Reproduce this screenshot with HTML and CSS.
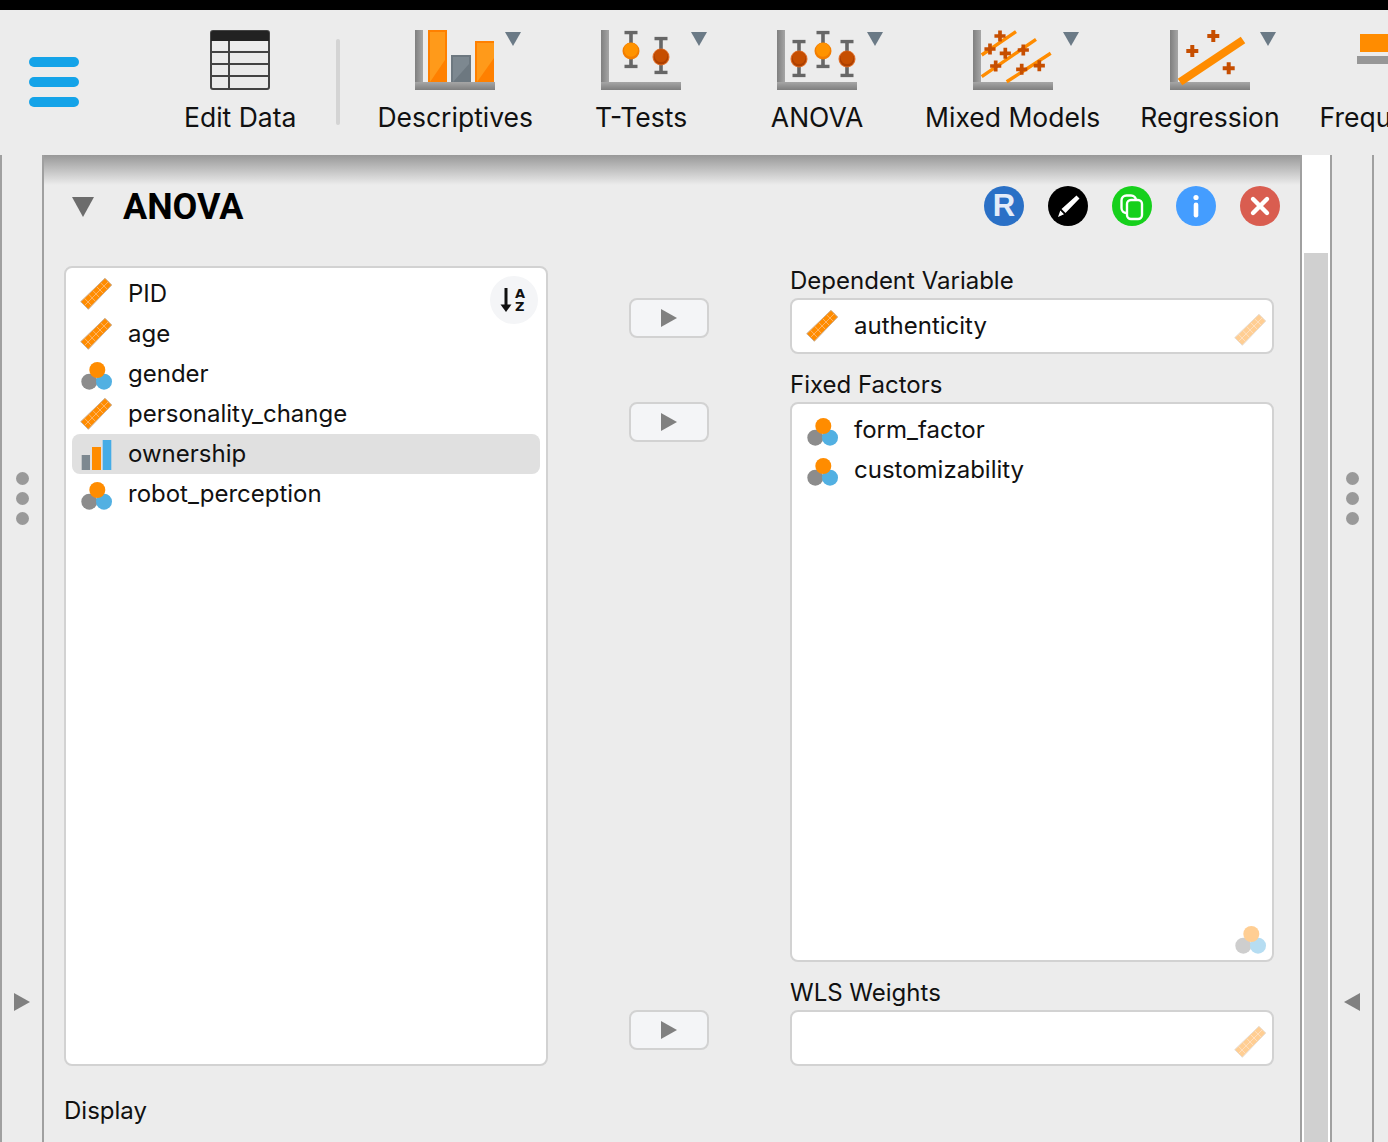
FILE: index.html
```html
<!DOCTYPE html>
<html lang="en">
<head>
<meta charset="utf-8">
<title>ANOVA</title>
<link rel="stylesheet" href="styles.css">
</head>
<body>
<svg class="defs" width="0" height="0" aria-hidden="true">
  <defs>
    <linearGradient id="axv" x1="0" x2="1" y1="0" y2="0"><stop offset="0" stop-color="#7f7f7f"/><stop offset="1" stop-color="#a6a6a6"/></linearGradient>
    <linearGradient id="axh" x1="0" x2="0" y1="0" y2="1"><stop offset="0" stop-color="#a6a6a6"/><stop offset="1" stop-color="#7f7f7f"/></linearGradient>
    <symbol id="axes" viewBox="0 0 80 60">
      <rect x="0" y="0" width="8" height="60" fill="url(#axv)"/>
      <rect x="0" y="52" width="80" height="8" fill="url(#axh)"/>
    </symbol>
    <symbol id="ruler" viewBox="0 0 32 32">
      <polygon points="0.7,23.7 25,0.3 31.7,7 8.3,31.3" fill="#ff8c00" stroke="#c8ae94" stroke-width="1"/>
      <path d="M4.4 20.2 11.6 27.7M8.6 16.2 15.6 23.6M12.6 12.4 19.6 19.6M16.6 8.6 23.6 15.6M20.6 4.8 27.6 11.6M4.5 27.5 28.4 3.6" stroke="#ffb566" stroke-width="1" fill="none"/>
    </symbol>
    <symbol id="nominal" viewBox="0 0 32 32">
      <circle cx="9.3" cy="23.7" r="8" fill="#8c8c8c"/>
      <circle cx="24" cy="23.7" r="8" fill="#52b0e2"/>
      <circle cx="17.3" cy="12" r="8" fill="#ff8c00"/>
    </symbol>
    <symbol id="ordinal" viewBox="0 0 32 32">
      <rect x="1.7" y="17" width="8.3" height="15" fill="#7d8890"/>
      <rect x="12" y="9" width="9" height="23" fill="#ff8c00"/>
      <rect x="22.7" y="2" width="8.6" height="30" fill="#45ace6"/>
    </symbol>
    <symbol id="ball-o" viewBox="0 0 18 18">
      <circle cx="9" cy="9" r="8.5" fill="#f27d00"/>
      <circle cx="9" cy="7.8" r="7" fill="#ff9300"/>
    </symbol>
    <symbol id="ball-d" viewBox="0 0 18 18">
      <circle cx="9" cy="9" r="8.5" fill="#e0702a"/>
      <circle cx="9" cy="9" r="7.4" fill="#ad4000"/>
      <circle cx="9" cy="7.6" r="6.4" fill="#c64e00"/>
    </symbol>
    <symbol id="whisk" viewBox="0 0 14 38">
      <path d="M0.5 2H13.5M7 2V36M0.5 36H13.5" stroke="#666" stroke-width="3.6" fill="none"/>
    </symbol>
    <symbol id="plus" viewBox="0 0 14 14">
      <path d="M7 1V13M1 7H13" stroke="#c64e00" stroke-width="4" fill="none"/>
    </symbol>
  </defs>
</svg>

<div class="app">
  <div class="topbar"></div>
  <header class="toolbar">
    <div class="menu"><span class="menu-bar"></span><span class="menu-bar"></span><span class="menu-bar"></span></div>

    <div class="tool">
      <svg class="tool-icon edit-icon" viewBox="0 0 60 60" width="60" height="60">
        <rect x="1" y="1" width="58" height="58" rx="2" fill="none" stroke="#444" stroke-width="2"/>
        <path d="M1 3a2 2 0 0 1 2-2H57a2 2 0 0 1 2 2V11H1Z" fill="#222"/>
        <path d="M1 22H59M1 34H59M1 46H59M19 11V59" stroke="#444" stroke-width="2" fill="none"/>
      </svg>
      <span class="tool-label">Edit Data</span>
    </div>

    <div class="sep"></div>

    <div class="tool">
      <div class="icon-wrap">
        <svg viewBox="0 0 80 60" width="80" height="60">
          <use href="#axes" width="80" height="60"/>
          <rect x="13" y="0" width="19" height="52" fill="#ff8000"/>
          <polygon points="15,2 30,2 30,30 15,52" fill="#ff9a1a"/>
          <rect x="36" y="25" width="20" height="27" fill="#6d7880"/>
          <polygon points="38,27 54,27 54,34 38,52" fill="#7d8890"/>
          <rect x="60" y="11" width="19" height="41" fill="#ff8000"/>
          <polygon points="62,13 79,13 79,28 62,52" fill="#ff9a1a"/>
        </svg>
        <span class="drop"></span>
      </div>
      <span class="tool-label">Descriptives</span>
    </div>

    <div class="tool">
      <div class="icon-wrap">
        <svg viewBox="0 0 80 60" width="80" height="60">
          <use href="#axes" width="80" height="60"/>
          <use href="#whisk" x="23" y="0.5" width="14" height="38"/>
          <use href="#ball-o" x="21" y="12" width="18" height="18"/>
          <use href="#whisk" x="53" y="6.5" width="14" height="38"/>
          <use href="#ball-d" x="51" y="18" width="18" height="18"/>
        </svg>
        <span class="drop"></span>
      </div>
      <span class="tool-label">T-Tests</span>
    </div>

    <div class="tool">
      <div class="icon-wrap">
        <svg viewBox="0 0 80 60" width="80" height="60">
          <use href="#axes" width="80" height="60"/>
          <use href="#whisk" x="15" y="9.5" width="14" height="38"/>
          <use href="#ball-d" x="13" y="20" width="18" height="18"/>
          <use href="#whisk" x="39" y="0.5" width="14" height="38"/>
          <use href="#ball-o" x="37" y="12" width="18" height="18"/>
          <use href="#whisk" x="63" y="9.5" width="14" height="38"/>
          <use href="#ball-d" x="61" y="20" width="18" height="18"/>
        </svg>
        <span class="drop"></span>
      </div>
      <span class="tool-label">ANOVA</span>
    </div>

    <div class="tool">
      <div class="icon-wrap">
        <svg viewBox="0 0 80 60" width="80" height="60">
          <use href="#axes" width="80" height="60"/>
          <path d="M8.7 25 43 1.7M8.7 46.7 63 9.3M33.7 51.7 77.7 23.3" stroke="#ff8c00" stroke-width="3.4" fill="none"/>
          <use href="#plus" x="20.5" y="-0.5" width="13" height="13"/>
          <use href="#plus" x="10.5" y="12.5" width="13" height="13"/>
          <use href="#plus" x="25.8" y="16.8" width="13" height="13"/>
          <use href="#plus" x="43.8" y="13.5" width="13" height="13"/>
          <use href="#plus" x="16.2" y="29.5" width="13" height="13"/>
          <use href="#plus" x="42.2" y="32.8" width="13" height="13"/>
          <use href="#plus" x="59.8" y="29.2" width="13" height="13"/>
        </svg>
        <span class="drop"></span>
      </div>
      <span class="tool-label">Mixed Models</span>
    </div>

    <div class="tool">
      <div class="icon-wrap">
        <svg viewBox="0 0 80 60" width="80" height="60">
          <use href="#axes" width="80" height="60"/>
          <path d="M10 52 73 10" stroke="#ff8c00" stroke-width="8" fill="none"/>
          <use href="#plus" x="36.3" y="-1" width="14" height="14"/>
          <use href="#plus" x="15.3" y="14" width="14" height="14"/>
          <use href="#plus" x="51.7" y="31.3" width="14" height="14"/>
        </svg>
        <span class="drop"></span>
      </div>
      <span class="tool-label">Regression</span>
    </div>

    <div class="tool">
      <div class="icon-wrap">
        <svg viewBox="0 0 80 60" width="80" height="60">
          <rect x="3" y="4" width="77" height="18" fill="#ff8c00"/>
          <rect x="0" y="26" width="80" height="8" fill="#979797"/>
        </svg>
      </div>
      <span class="tool-label">Frequencies</span>
    </div>
  </header>

  <div class="workspace">
    <aside class="gutter">
      <div class="dots"><span class="dot"></span><span class="dot"></span><span class="dot"></span></div>
      <span class="tri tri-right"></span>
    </aside>

    <main class="panel">
      <div class="panel-head">
        <span class="collapse"></span>
        <h1 class="title">ANOVA</h1>
        <div class="actions">
          <span class="round r-blue">R</span>
          <span class="round r-black">
            <svg viewBox="0 0 40 40" width="40" height="40"><path d="M28.5 9.5 31.5 12.5 17.5 27 13.5 23ZM12.3 24.5 16 28.3 10 31Z" fill="#fff"/></svg>
          </span>
          <span class="round r-green">
            <svg viewBox="0 0 40 40" width="40" height="40">
              <rect x="9.5" y="9.5" width="14.5" height="17.5" rx="5" fill="none" stroke="#fff" stroke-width="2.4"/>
              <rect x="15" y="14" width="15" height="19" rx="4" fill="#16d01c" stroke="#fff" stroke-width="2.4"/>
            </svg>
          </span>
          <span class="round r-info">
            <svg viewBox="0 0 40 40" width="40" height="40"><circle cx="20" cy="11.5" r="2.6" fill="#fff"/><rect x="17.7" y="16.5" width="4.6" height="15" rx="2.3" fill="#fff"/></svg>
          </span>
          <span class="round r-red">
            <svg viewBox="0 0 40 40" width="40" height="40"><path d="M13 13 27 27M27 13 13 27" stroke="#fff" stroke-width="4.4" stroke-linecap="round" fill="none"/></svg>
          </span>
        </div>
      </div>

      <div class="form">
        <div class="box supplier">
          <div class="var"><svg class="vi" width="32" height="32"><use href="#ruler" width="32" height="32"/></svg><span>PID</span></div>
          <div class="var"><svg class="vi" width="32" height="32"><use href="#ruler" width="32" height="32"/></svg><span>age</span></div>
          <div class="var"><svg class="vi" width="32" height="32"><use href="#nominal" width="32" height="32"/></svg><span>gender</span></div>
          <div class="var"><svg class="vi" width="32" height="32"><use href="#ruler" width="32" height="32"/></svg><span>personality_change</span></div>
          <div class="var selected"><svg class="vi" width="32" height="32"><use href="#ordinal" width="32" height="32"/></svg><span>ownership</span></div>
          <div class="var"><svg class="vi" width="32" height="32"><use href="#nominal" width="32" height="32"/></svg><span>robot_perception</span></div>
          <div class="sort">
            <svg viewBox="0 0 14 26" width="14" height="26"><path d="M7 1V20" stroke="#111" stroke-width="3" fill="none"/><path d="M1.5 17.5H12.5L7 25Z" fill="#111"/></svg>
            <div class="sort-letters"><span>A</span><span>Z</span></div>
          </div>
        </div>

        <div class="targets">
          <div class="target">
            <button class="move"><span class="tri-move"></span></button>
            <div class="group">
              <div class="group-label">Dependent Variable</div>
              <div class="box slot">
                <div class="var"><svg class="vi" width="32" height="32"><use href="#ruler" width="32" height="32"/></svg><span>authenticity</span></div>
                <svg class="hint" width="32" height="32"><use href="#ruler" width="32" height="32"/></svg>
              </div>
            </div>
          </div>
          <div class="target">
            <button class="move"><span class="tri-move"></span></button>
            <div class="group">
              <div class="group-label">Fixed Factors</div>
              <div class="box factors">
                <div class="var"><svg class="vi" width="32" height="32"><use href="#nominal" width="32" height="32"/></svg><span>form_factor</span></div>
                <div class="var"><svg class="vi" width="32" height="32"><use href="#nominal" width="32" height="32"/></svg><span>customizability</span></div>
                <svg class="hint" width="32" height="32"><use href="#nominal" width="32" height="32"/></svg>
              </div>
            </div>
          </div>
          <div class="target">
            <button class="move"><span class="tri-move"></span></button>
            <div class="group">
              <div class="group-label">WLS Weights</div>
              <div class="box slot">
                <svg class="hint" width="32" height="32"><use href="#ruler" width="32" height="32"/></svg>
              </div>
            </div>
          </div>
        </div>
      </div>

      <div class="display-label">Display</div>
    </main>

    <div class="scroll"><div class="thumb"></div></div>

    <aside class="gutter">
      <div class="dots"><span class="dot"></span><span class="dot"></span><span class="dot"></span></div>
      <span class="tri tri-left"></span>
    </aside>
  </div>
</div>
</body>
</html>
```

FILE: styles.css
```css
* { box-sizing: border-box; }
html, body { margin: 0; height: 100%; overflow: hidden; }
body { background: #ececec; color: #111; font-family: Inter, Roboto, "Liberation Sans", sans-serif; }
.defs { position: absolute; }
.app { height: 1142px; display: flex; flex-direction: column; overflow: hidden; }
.topbar { height: 10px; background: #000; flex: none; }

.toolbar { height: 144px; flex: none; display: flex; align-items: flex-start; background: #ececec; overflow: hidden; }
.menu { width: 164px; flex: none; height: 100%; padding-left: 29px; display: flex; flex-direction: column; justify-content: center; gap: 10px; }
.menu-bar { display: block; width: 50px; height: 10px; border-radius: 5px; background: #14a3e8; }
.tool { flex: none; min-width: 176px; padding: 20px 20px 0; display: flex; flex-direction: column; align-items: center; }
.tool:nth-child(2) { min-width: 0; }
.tool-icon, .icon-wrap svg { display: block; }
.icon-wrap { position: relative; width: 80px; height: 60px; }
.drop { position: absolute; left: 90px; top: 2px; width: 0; height: 0; border-left: 8.5px solid transparent; border-right: 8.5px solid transparent; border-top: 14px solid #6b7a86; }
.tool-label { margin-top: 11px; font-size: 26.5px; line-height: 32px; white-space: nowrap; }
.sep { flex: none; width: 4px; height: 86px; margin: 29px 17px 0 20px; background: #d4d4d4; border-radius: 2px; }

.workspace { flex: 1; display: flex; min-height: 0; padding-top: 1px; }
.gutter { flex: none; width: 44px; border-left: 2px solid #a0a0a0; border-right: 2px solid #a0a0a0; display: flex; flex-direction: column; align-items: center; padding-top: 317px; }
.dots { display: flex; flex-direction: column; gap: 7px; }
.dot { display: block; width: 13px; height: 13px; border-radius: 50%; background: #999; }
.tri { display: block; width: 0; height: 0; margin-top: 468px; border-top: 9px solid transparent; border-bottom: 9px solid transparent; }
.tri-right { border-left: 16px solid #808080; }
.tri-left { border-right: 16px solid #808080; }

.panel { flex: none; width: 1258px; border-right: 2px solid #a0a0a0; background: linear-gradient(#989898, #ececec 30px); overflow: hidden; }
.panel-head { display: flex; align-items: center; height: 71px; padding: 31px 20px 0 28px; }
.collapse { width: 0; height: 0; margin-top: 2px; border-left: 11.5px solid transparent; border-right: 11.5px solid transparent; border-top: 20px solid #6c6c6c; }
.title { margin: 2px 0 0 29px; font-family: Roboto, sans-serif; font-size: 36px; line-height: 40px; font-weight: 700; color: #000; }
.actions { margin-left: auto; display: flex; gap: 24px; }
.round { display: block; width: 40px; height: 40px; border-radius: 50%; overflow: hidden; }
.round svg { display: block; }
.r-blue { background: #2a70c6; color: #e4ecf8; font: 700 31px/40px "Liberation Sans", sans-serif; text-align: center; }
.r-black { background: #000; }
.r-green { background: #16d01c; }
.r-info { background: #449dff; }
.r-red { background: #d95d50; }

.form { display: flex; margin-top: 40px; padding-left: 20px; }
.box { position: relative; background: #fff; border: 2px solid #d2d2d2; border-radius: 8px; padding: 6px; }
.supplier { width: 484px; height: 800px; flex: none; }
.var { display: flex; align-items: center; height: 40px; padding-left: 8px; gap: 16px; font-size: 24px; line-height: 40px; border-radius: 8px; white-space: nowrap; }
.var span { display: block; height: 40px; }
.vi { flex: none; display: block; }
.selected { background: #e0e0e0; }
.sort { position: absolute; right: 8px; top: 8px; width: 48px; height: 48px; border-radius: 50%; background: #f4f5f7; display: flex; align-items: center; justify-content: center; gap: 2px; padding-right: 4px; }
.sort-letters { display: flex; flex-direction: column; font: 700 13px/13px "DejaVu Sans", sans-serif; color: #111; }

.targets { margin-left: 81px; display: flex; flex-direction: column; gap: 16px; }
.target { display: flex; align-items: flex-start; gap: 81px; }
.move { width: 80px; height: 40px; margin: 32px 0 0; padding: 0; background: #f4f5f7; border: 2px solid #d2d2d2; border-radius: 8px; display: flex; align-items: center; justify-content: center; }
.tri-move { display: block; width: 0; height: 0; border-top: 9px solid transparent; border-bottom: 9px solid transparent; border-left: 16px solid #808080; }
.group { width: 484px; }
.group-label { height: 32px; font-size: 24px; line-height: 30px; }
.slot { height: 56px; }
.factors { height: 560px; }
.hint { position: absolute; right: 6px; bottom: 6px; opacity: .42; }

.display-label { margin: 30px 0 0 20px; font-size: 24px; line-height: 30px; }

.scroll { flex: none; width: 28px; background: #fff; padding: 98px 2px 0; }
.thumb { height: 100%; background: #d0d0d0; }
```
